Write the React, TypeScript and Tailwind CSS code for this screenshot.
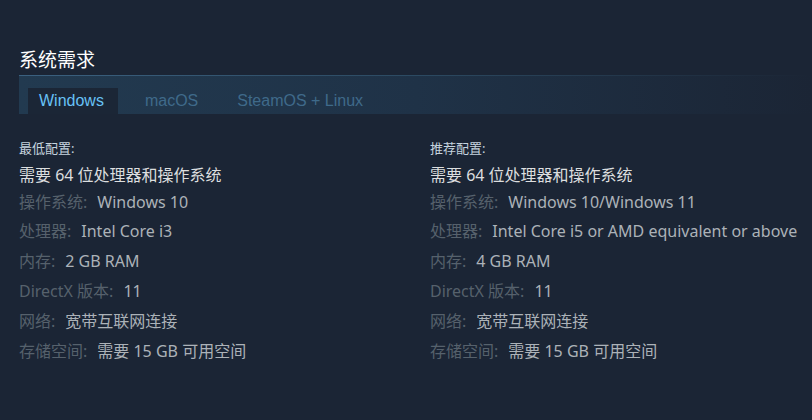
const minimum = [
  { label: '操作系统:', value: 'Windows 10' },
  { label: '处理器:', value: 'Intel Core i3' },
  { label: '内存:', value: '2 GB RAM' },
  { label: 'DirectX 版本:', value: '11' },
  { label: '网络:', value: '宽带互联网连接' },
  { label: '存储空间:', value: '需要 15 GB 可用空间' },
]

const recommended = [
  { label: '操作系统:', value: 'Windows 10/Windows 11' },
  { label: '处理器:', value: 'Intel Core i5 or AMD equivalent or above' },
  { label: '内存:', value: '4 GB RAM' },
  { label: 'DirectX 版本:', value: '11' },
  { label: '网络:', value: '宽带互联网连接' },
  { label: '存储空间:', value: '需要 15 GB 可用空间' },
]

function Column({ title, rows }: { title: string; rows: { label: string; value: string }[] }) {
  return (
    <div className="whitespace-nowrap">
      <div className="text-[13px] leading-[18px] text-[#c6d4df]">{title}</div>
      <ul className="mt-[8px] text-[16px] leading-[20px]">
        <li className="text-[#dcdedf]">需要 64 位处理器和操作系统</li>
        {rows.map((r, i) => (
          <li key={r.label} className={i === 0 ? 'mt-[7px]' : i === 1 ? 'mt-[9px]' : 'mt-[10px]'}>
            <span className="text-[#56616c]">{r.label}</span>
            <span className="ml-[10px] text-[#acb2b8]">{r.value}</span>
          </li>
        ))}
      </ul>
    </div>
  )
}

export default function App() {
  return (
    <div
      className="h-[420px] w-[812px] overflow-hidden bg-[#1b2535] pl-[19px] pt-[48px]"
      style={{ fontFamily: '"Noto Sans", "Noto Sans CJK SC", sans-serif' }}
    >
      <h2 className="text-[19px] leading-[24px] font-normal text-white">系统需求</h2>
      <div className="mt-[3px] h-px bg-gradient-to-r from-[#3b6180] via-[#2c4a62] to-transparent" />
      <div className="flex h-[38px] items-end bg-gradient-to-r from-[#223a50] via-[#1f3247] to-transparent pl-[9px]">
        <div
          className="flex gap-[15px] text-[16px] leading-[26px]"
          style={{ fontFamily: 'Arial, "Liberation Sans", sans-serif' }}
        >
          <div className="bg-[#1b2636] px-[11px] pr-[14px] text-[#67c1f5]">Windows</div>
          <div className="px-[12px] text-[#3f6a8a]">macOS</div>
          <div className="px-[12px] text-[#3f6a8a]">SteamOS + Linux</div>
        </div>
      </div>
      <div className="mt-[25px] grid grid-cols-[411px_1fr]">
        <Column title="最低配置:" rows={minimum} />
        <Column title="推荐配置:" rows={recommended} />
      </div>
    </div>
  )
}
